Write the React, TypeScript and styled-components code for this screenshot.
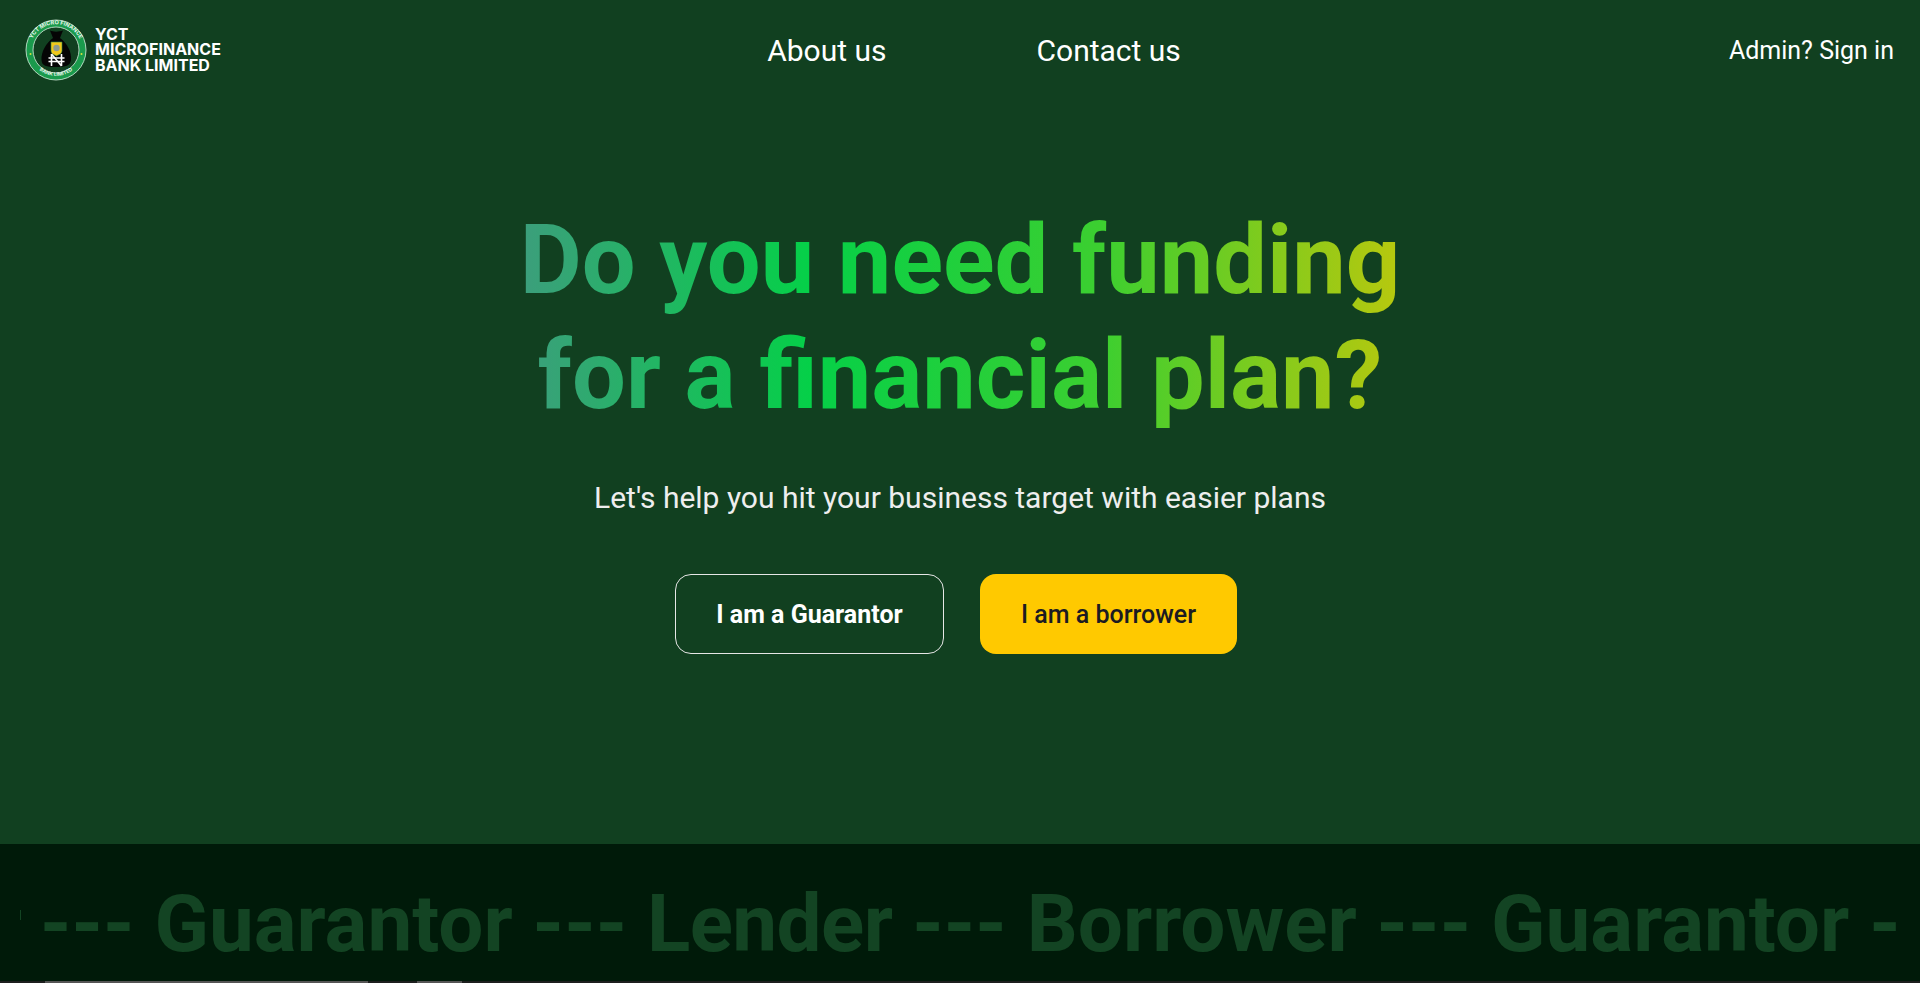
import React from 'react';
import styled, { createGlobalStyle } from 'styled-components';

const GlobalStyle = createGlobalStyle`
  html, body {
    margin: 0;
    padding: 0;
    height: 100%;
    overflow: hidden;
    background: #114020;
    font-family: Roboto, "Liberation Sans", sans-serif;
  }
`;

const Page = styled.div`
  height: 983px;
  display: flex;
  flex-direction: column;
  overflow: hidden;
`;

const Hero = styled.section`
  height: 844px;
  background: #114020;
  display: flex;
  flex-direction: column;
`;

const Nav = styled.nav`
  display: grid;
  grid-template-columns: 1fr auto 1fr;
  align-items: center;
  height: 100px;
  padding: 0 26px 0 25px;
`;

const Brand = styled.div`
  display: flex;
  align-items: center;
  gap: 8px;
`;

const BrandName = styled.div`
  font-family: Inter, "Open Sans", sans-serif;
  font-size: 16px;
  line-height: 15.5px;
  font-weight: 700;
  color: #fff;
  width: 140px;
`;

const NavLinks = styled.div`
  display: flex;
  gap: 150px;
  margin-left: 29px;
`;

const NavLink = styled.a`
  font-size: 30px;
  color: #fff;
`;

const SignIn = styled.a`
  justify-self: end;
  font-size: 25px;
  color: #fff;
`;

const Main = styled.div`
  display: flex;
  flex-direction: column;
  align-items: center;
  padding-top: 103px;
`;

const Heading = styled.h1`
  margin: 0;
  font-size: 95.5px;
  line-height: 115px;
  font-weight: 700;
  text-align: center;
  background: linear-gradient(90deg, #3c9e7c 0%, #05d048 33%, #3ccf30 66%, #b8c80e 100%);
  -webkit-background-clip: text;
  background-clip: text;
  color: transparent;
`;

const Subtitle = styled.p`
  margin: 47px 0 0;
  font-size: 30px;
  line-height: 36px;
  color: #eeeeee;
`;

const Actions = styled.div`
  display: flex;
  gap: 36px;
  margin-top: 58px;
  margin-left: -8px;
`;

const Button = styled.button<{ $primary?: boolean }>`
  height: 80px;
  width: ${p => (p.$primary ? '257px' : '269px')};
  border-radius: 16px;
  border: ${p => (p.$primary ? 'none' : '1px solid #e6e6e6')};
  background: ${p => (p.$primary ? '#ffc900' : 'transparent')};
  color: ${p => (p.$primary ? '#1c1b22' : '#fff')};
  font-family: inherit;
  font-size: 25px;
  font-weight: ${p => (p.$primary ? 500 : 700)};
  padding: 0;
`;

const Strip = styled.section`
  flex: 1;
  background: #001a09;
  position: relative;
  overflow: hidden;
  padding-top: 33px;
`;

const Marquee = styled.div`
  white-space: pre;
  font-size: 80px;
  line-height: 94px;
  font-weight: 700;
  color: #134423;
  padding-left: 40px;
`;

const TightWord = styled.span`
  letter-spacing: -0.6px;
`;

const Tick = styled.div`
  position: absolute;
  left: 20px;
  top: 66px;
  width: 1px;
  height: 10px;
  background: #134423;
`;

const BottomEdge = styled.div`
  position: absolute;
  bottom: 0;
  left: 0;
  right: 0;
  height: 2px;
  background: #1d1f1e;
`;

const CutOff = styled.div<{ $left: number; $width: number }>`
  position: absolute;
  bottom: 0;
  left: ${p => p.$left}px;
  width: ${p => p.$width}px;
  height: 2px;
  background: #555;
`;

function Logo() {
  return (
    <svg width="62" height="62" viewBox="0 0 62 62" aria-hidden="true">
      <defs>
        <path id="ringTop" d="M5.2 36 A26.2 26.2 0 1 1 56.8 36" />
        <path id="ringBottom" d="M8 44 A27 27 0 0 0 54 44" />
      </defs>
      <circle cx="31" cy="31" r="26.5" fill="none" stroke="#1a9a4c" strokeWidth="7" />
      <circle cx="31" cy="31" r="30" fill="none" stroke="#d8efe0" strokeWidth="0.8" />
      <circle cx="31" cy="31" r="23" fill="none" stroke="#d8efe0" strokeWidth="0.8" />
      <text fontFamily="Inter, sans-serif" fontSize="5.6" fontWeight="700" fill="#e8f5ec">
        <textPath href="#ringTop" startOffset="50%" textAnchor="middle">YCT MICRO FINANCE</textPath>
      </text>
      <text fontFamily="Inter, sans-serif" fontSize="5" fontWeight="700" fill="#e8f5ec">
        <textPath href="#ringBottom" startOffset="50%" textAnchor="middle">BANK LIMITED</textPath>
      </text>
      <circle cx="5.5" cy="35" r="1" fill="#d8e23a" />
      <circle cx="56.5" cy="35" r="1" fill="#d8e23a" />
      <path d="M25 11.5 C28 13 34 13 38 11.5 L35 19 C42 24 47 33 46 41 C45 47 41 48 31 48 C21 48 17 47 16.5 41 C16 33 21 24 28 19 Z" fill="#050505" />
      <path d="M26 23 H37 V32 C37 35 33 36 31.5 37 C30 36 26 35 26 32 Z" fill="#f2c71b" stroke="#2f8f46" strokeWidth="0.6" />
      <circle cx="31.5" cy="29" r="3.2" fill="#8d9a8f" />
      <g stroke="#fff" strokeWidth="1.6" fill="none">
        <path d="M26.5 35 V47 M36.5 35 V47 M26.5 35 L36.5 47" />
        <path d="M23.5 39 H39.5 M23.5 42.5 H39.5" />
      </g>
    </svg>
  );
}

export default function App() {
  return (
    <Page>
      <GlobalStyle />
      <Hero>
        <Nav>
          <Brand>
            <Logo />
            <BrandName>YCT MICROFINANCE BANK LIMITED</BrandName>
          </Brand>
          <NavLinks>
            <NavLink>About us</NavLink>
            <NavLink>Contact us</NavLink>
          </NavLinks>
          <SignIn>Admin? Sign in</SignIn>
        </Nav>
        <Main>
          <Heading>
            Do you need funding
            <br />
            for a financial plan?
          </Heading>
          <Subtitle>Let's help you hit your business target with easier plans</Subtitle>
          <Actions>
            <Button>I am a Guarantor</Button>
            <Button $primary>I am a borrower</Button>
          </Actions>
        </Main>
      </Hero>
      <Strip>
        <Tick />
        <Marquee>
          --- Guarantor --- <TightWord>Lender</TightWord> --- Borrower --- Guarantor -
        </Marquee>
        <BottomEdge />
        <CutOff $left={45} $width={323} />
        <CutOff $left={417} $width={45} />
      </Strip>
    </Page>
  );
}
